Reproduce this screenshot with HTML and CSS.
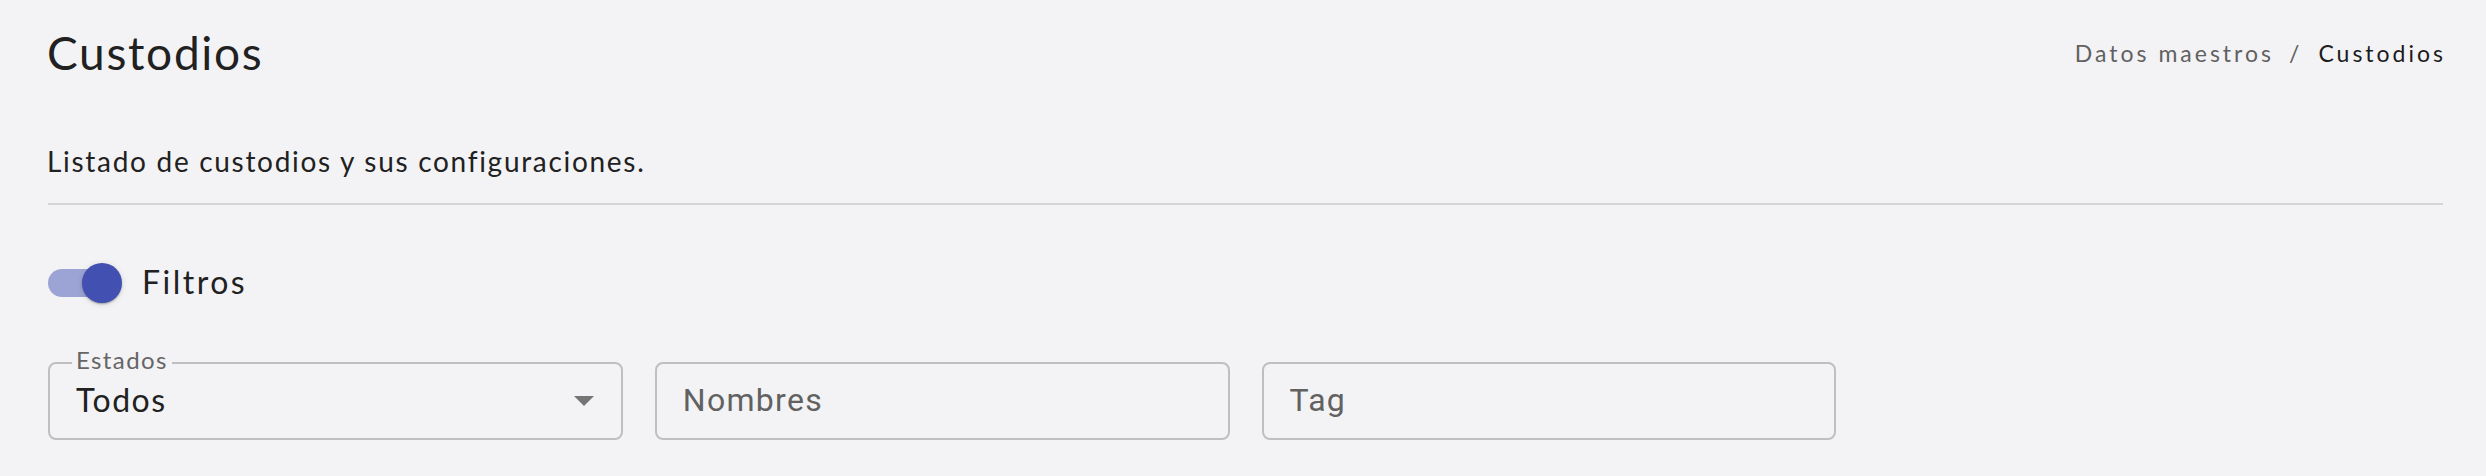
FILE: index.html
```html
<!DOCTYPE html>
<html lang="es">
<head>
<meta charset="utf-8">
<title>Custodios</title>
<link rel="stylesheet" href="styles.css">
</head>
<body>
<main class="page">
  <header class="page-header">
    <h1 class="title">Custodios</h1>
    <nav class="breadcrumbs">
      <span class="crumb">Datos maestros</span>
      <span class="sep">/</span>
      <span class="crumb current">Custodios</span>
    </nav>
  </header>
  <p class="description">Listado de custodios y sus configuraciones.</p>
  <hr class="divider">
  <label class="filter-toggle">
    <span class="switch"><span class="thumb"></span></span>
    <span class="toggle-label">Filtros</span>
  </label>
  <div class="filters">
    <div class="field select">
      <span class="field-label">Estados</span>
      <span class="value">Todos</span>
      <svg class="arrow" width="20" height="10" viewBox="0 0 20 10"><polygon points="0,0 20,0 10,10" fill="#757575"/></svg>
    </div>
    <div class="field"><span class="placeholder">Nombres</span></div>
    <div class="field"><span class="placeholder">Tag</span></div>
  </div>
</main>
</body>
</html>
```
FILE: styles.css
```css
html, body {
  margin: 0;
  padding: 0;
  background: #f3f3f5;
}
body {
  font-family: "Lato", "Noto Sans", sans-serif;
  color: #212121;
}
.page {
  padding: 25px 43px 0 48px;
}
.page-header {
  display: flex;
  justify-content: space-between;
  align-items: center;
  height: 55px;
}
.title {
  margin: 0 0 0 -1px;
  font-size: 46px;
  line-height: 1.2;
  font-weight: 400;
  letter-spacing: 1.7px;
}
.breadcrumbs {
  display: flex;
  align-items: baseline;
  font-size: 23px;
  letter-spacing: 3px;
  color: #616161;
}
.sep {
  margin: 0 16px 0 15px;
}
.current {
  color: #1c1c1c;
  margin-right: -3px;
}
.description {
  margin: 65px 0 0 -1px;
  font-size: 28px;
  line-height: 1.2;
  letter-spacing: 1.7px;
}
.divider {
  margin: 24px 0 0;
  border: 0;
  height: 2px;
  background: #d5d5d8;
}
.filter-toggle {
  display: flex;
  align-items: center;
  height: 76px;
  margin-top: 40px;
}
.switch {
  position: relative;
  width: 68px;
  height: 28px;
  border-radius: 14px;
  background: #9ca4d5;
  margin-right: 26px;
}
.thumb {
  position: absolute;
  left: 34px;
  top: -6px;
  width: 40px;
  height: 40px;
  border-radius: 50%;
  background: #4150b1;
  box-shadow: 0 2px 2px -1px rgba(0,0,0,0.2), 0 1px 2px rgba(0,0,0,0.14), 0 1px 6px rgba(0,0,0,0.12);
}
.toggle-label {
  font-size: 32px;
  line-height: 1.2;
  letter-spacing: 2.5px;
}
.filters {
  display: grid;
  grid-template-columns: repeat(4, 1fr);
  gap: 32px;
  margin-top: 41px;
}
.field {
  position: relative;
  box-sizing: border-box;
  height: 78px;
  border: 2px solid #bfbfc1;
  border-radius: 8px;
  display: flex;
  align-items: center;
  padding: 0 26px 0 26px;
}
.field-label {
  position: absolute;
  left: 22px;
  top: -18px;
  padding: 0 4px;
  background: #f3f3f5;
  font-size: 24px;
  line-height: 1.2;
  letter-spacing: 1.4px;
  color: #666666;
}
.value {
  flex: 1;
  font-size: 32px;
  line-height: 1.2;
  letter-spacing: 1.5px;
}
.arrow {
  flex: none;
  margin-right: 1px;
}
.placeholder {
  font-family: "Roboto", "Liberation Sans", sans-serif;
  font-size: 32px;
  line-height: 1.2;
  letter-spacing: 1.3px;
  color: #616161;
}
```
